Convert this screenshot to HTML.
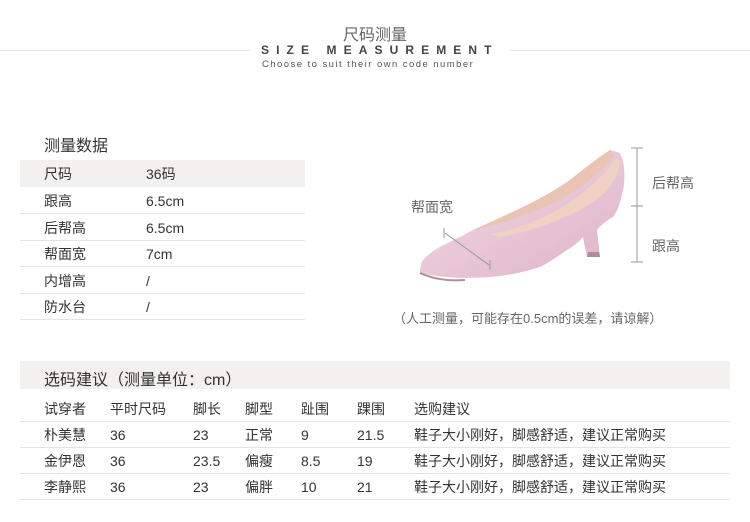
<!DOCTYPE html>
<html><head><meta charset="utf-8"><style>
*{margin:0;padding:0;box-sizing:border-box}
body{width:750px;height:522px;background:#fff;font-family:"Liberation Sans","Noto Sans CJK SC",sans-serif;color:#333;position:relative;overflow:hidden}
.a{position:absolute;white-space:nowrap}
.bar{position:absolute;background:#f2f1ef}
.ln{position:absolute;height:1px;background:#e4e4e4}
.t{font-size:14px;line-height:16px}
</style></head><body>
<div class="a" style="left:0;width:750px;top:21px;text-align:center;font-size:16px;color:#666">尺码测量</div>
<div class="ln" style="left:0;width:250px;top:50px;background:#e8e8e8"></div>
<div class="ln" style="left:510px;width:240px;top:50px;background:#e8e8e8"></div>
<div class="a" style="left:261px;top:43px;font-size:12px;font-weight:bold;letter-spacing:7.1px;color:#444">SIZE MEASUREMENT</div>
<div class="a" style="left:262px;top:59px;font-size:9.5px;letter-spacing:1.45px;color:#555">Choose to suit their own code number</div>

<div class="a" style="left:44px;top:132px;font-size:16px">测量数据</div>
<div class="bar" style="left:20px;width:285px;top:160px;height:27px"></div>
<div class="ln" style="left:20px;width:285px;top:213px"></div>
<div class="ln" style="left:20px;width:285px;top:240px"></div>
<div class="ln" style="left:20px;width:285px;top:266px"></div>
<div class="ln" style="left:20px;width:285px;top:293px"></div>
<div class="ln" style="left:20px;width:285px;top:319px"></div>
<div class="a t" style="left:44px;top:166px">尺码</div><div class="a t" style="left:146px;top:166px">36码</div>
<div class="a t" style="left:44px;top:193px">跟高</div><div class="a t" style="left:146px;top:193px">6.5cm</div>
<div class="a t" style="left:44px;top:220px">后帮高</div><div class="a t" style="left:146px;top:220px">6.5cm</div>
<div class="a t" style="left:44px;top:246px">帮面宽</div><div class="a t" style="left:146px;top:246px">7cm</div>
<div class="a t" style="left:44px;top:273px">内增高</div><div class="a t" style="left:146px;top:273px">/</div>
<div class="a t" style="left:44px;top:299px">防水台</div><div class="a t" style="left:146px;top:299px">/</div>

<svg class="a" style="left:380px;top:110px" width="340" height="200" viewBox="0 0 340 200">
<defs><linearGradient id="g" x1="0" y1="0" x2="1" y2="1"><stop offset="0" stop-color="#f3dbe6"/><stop offset="1" stop-color="#ddb3c8"/></linearGradient></defs>
<path d="M40 163 Q40 152 45 148 Q55 138 70 132 L93 120 Q120 108 143 97 Q170 84 190 70 Q212 52 230 40 L240 43 Q246 55 244 75 Q240 98 233 107 Q222 113 217 120 L220 147 L207 147 L203 127 Q196 135 187 140 Q170 152 160 157 Q135 165 110 167 Q70 170 40 163Z" fill="url(#g)"/>
<path d="M93 120 Q140 110 180 90 Q215 70 234 46 L230 40 Q212 52 190 70 Q170 84 143 97 Q120 108 93 120Z" fill="#e9c4b3"/>
<path d="M110 124 Q160 115 200 85 Q225 65 236 48 L240 50 Q238 80 200 100 Q160 120 120 127Z" fill="#efd2c3"/>
<path d="M40 163 Q60 172 85 170" stroke="#b38c9c" stroke-width="2" fill="none"/>
<path d="M207 147 L220 147 L219 142 L208 142Z" fill="#a89096"/>
<line x1="65" y1="123" x2="109" y2="155" stroke="#999" stroke-width="1"/>
<line x1="64" y1="118" x2="64" y2="128" stroke="#999"/><line x1="110" y1="150" x2="110" y2="160" stroke="#999"/>
<line x1="257" y1="38" x2="257" y2="152" stroke="#999"/>
<line x1="251" y1="38" x2="263" y2="38" stroke="#999"/>
<line x1="251" y1="96" x2="263" y2="96" stroke="#999"/>
<line x1="251" y1="152" x2="263" y2="152" stroke="#999"/>
</svg>
<div class="a t" style="left:411px;top:199px;color:#666">帮面宽</div>
<div class="a t" style="left:652px;top:175px;color:#666">后帮高</div>
<div class="a t" style="left:652px;top:238px;color:#666">跟高</div>
<div class="a" style="left:393px;top:308px;font-size:13px;color:#666">（人工测量，可能存在0.5cm的误差，请谅解）</div>

<div class="bar" style="left:20px;width:710px;top:361px;height:28px"></div>
<div class="a" style="left:44px;top:366px;font-size:16px">选码建议（测量单位：cm）</div>
<div class="ln" style="left:20px;width:710px;top:421px"></div>
<div class="ln" style="left:20px;width:710px;top:447px"></div>
<div class="ln" style="left:20px;width:710px;top:473px"></div>
<div class="ln" style="left:20px;width:710px;top:499px"></div>
<div class="a t" style="left:44px;top:401px">试穿者</div><div class="a t" style="left:110px;top:401px">平时尺码</div><div class="a t" style="left:193px;top:401px">脚长</div><div class="a t" style="left:245px;top:401px">脚型</div><div class="a t" style="left:301px;top:401px">趾围</div><div class="a t" style="left:357px;top:401px">踝围</div><div class="a t" style="left:414px;top:401px">选购建议</div>
<div class="a t" style="left:44px;top:427px">朴美慧</div><div class="a t" style="left:110px;top:427px">36</div><div class="a t" style="left:193px;top:427px">23</div><div class="a t" style="left:245px;top:427px">正常</div><div class="a t" style="left:301px;top:427px">9</div><div class="a t" style="left:357px;top:427px">21.5</div><div class="a t" style="left:414px;top:427px">鞋子大小刚好，脚感舒适，建议正常购买</div>
<div class="a t" style="left:44px;top:453px">金伊恩</div><div class="a t" style="left:110px;top:453px">36</div><div class="a t" style="left:193px;top:453px">23.5</div><div class="a t" style="left:245px;top:453px">偏瘦</div><div class="a t" style="left:301px;top:453px">8.5</div><div class="a t" style="left:357px;top:453px">19</div><div class="a t" style="left:414px;top:453px">鞋子大小刚好，脚感舒适，建议正常购买</div>
<div class="a t" style="left:44px;top:479px">李静熙</div><div class="a t" style="left:110px;top:479px">36</div><div class="a t" style="left:193px;top:479px">23</div><div class="a t" style="left:245px;top:479px">偏胖</div><div class="a t" style="left:301px;top:479px">10</div><div class="a t" style="left:357px;top:479px">21</div><div class="a t" style="left:414px;top:479px">鞋子大小刚好，脚感舒适，建议正常购买</div>
</body></html>
